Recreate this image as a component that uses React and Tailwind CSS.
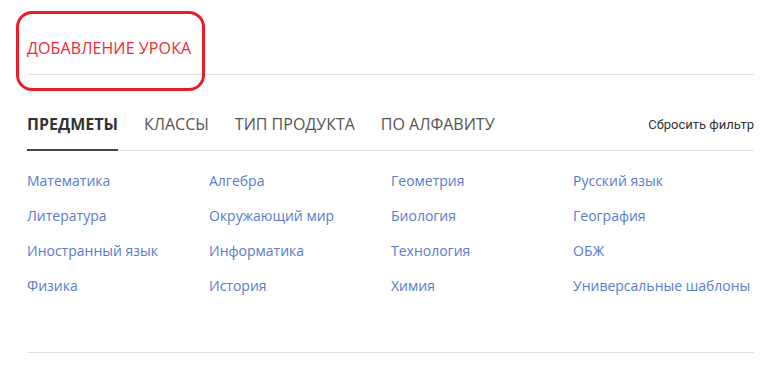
const subjects = [
  ['Математика', 'Алгебра', 'Геометрия', 'Русский язык'],
  ['Литература', 'Окружающий мир', 'Биология', 'География'],
  ['Иностранный язык', 'Информатика', 'Технология', 'ОБЖ'],
  ['Физика', 'История', 'Химия', 'Универсальные шаблоны'],
];

const tabs = ['ПРЕДМЕТЫ', 'КЛАССЫ', 'ТИП ПРОДУКТА', 'ПО АЛФАВИТУ'];

export default function App() {
  return (
    <div className="relative w-[782px] h-[367px] bg-white font-['Open_Sans',sans-serif]">
      {/* header */}
      <div className="ml-[27px] mr-[28px] pt-[37px] border-b border-[#e2e2e2] h-[75px]">
        <h1 className="text-[16px] leading-[22px] text-[#ee2a33] tracking-[0.1px]">ДОБАВЛЕНИЕ УРОКА</h1>
      </div>

      {/* annotation frame */}
      <div className="absolute left-[16px] top-[11px] w-[189px] h-[80px] border-[3px] border-[#ec1c24] rounded-[16px]" />

      {/* tabs */}
      <div className="ml-[27px] mr-[28px] mt-[38px] flex items-end border-b border-[#e2e2e2]">
        {tabs.map((tab, i) => (
          <button
            key={tab}
            className={`pb-[14px] text-[16px] leading-[22px] mr-[26px] ${
              i === 0
                ? 'font-bold text-[#333] border-b-2 border-[#444] -mb-px'
                : 'text-[#555] border-b-2 border-transparent -mb-px'
            }`}
          >
            {tab}
          </button>
        ))}
        <button className="ml-auto mb-[16px] text-[13px] leading-[18px] text-[#333] font-['Roboto',sans-serif]">
          Сбросить фильтр
        </button>
      </div>

      {/* subject grid */}
      <div className="ml-[27px] mr-[28px] pt-[20px] pb-[41px] border-b border-[#e2e2e2]">
        {subjects.map((row, r) => (
          <div key={r} className="grid grid-cols-[182px_182px_182px_1fr] h-[35px]">
            {row.map((s) => (
              <a key={s} className="text-[14px] leading-[20px] text-[#5a7ad0] cursor-pointer whitespace-nowrap">
                {s}
              </a>
            ))}
          </div>
        ))}
      </div>
    </div>
  );
}
